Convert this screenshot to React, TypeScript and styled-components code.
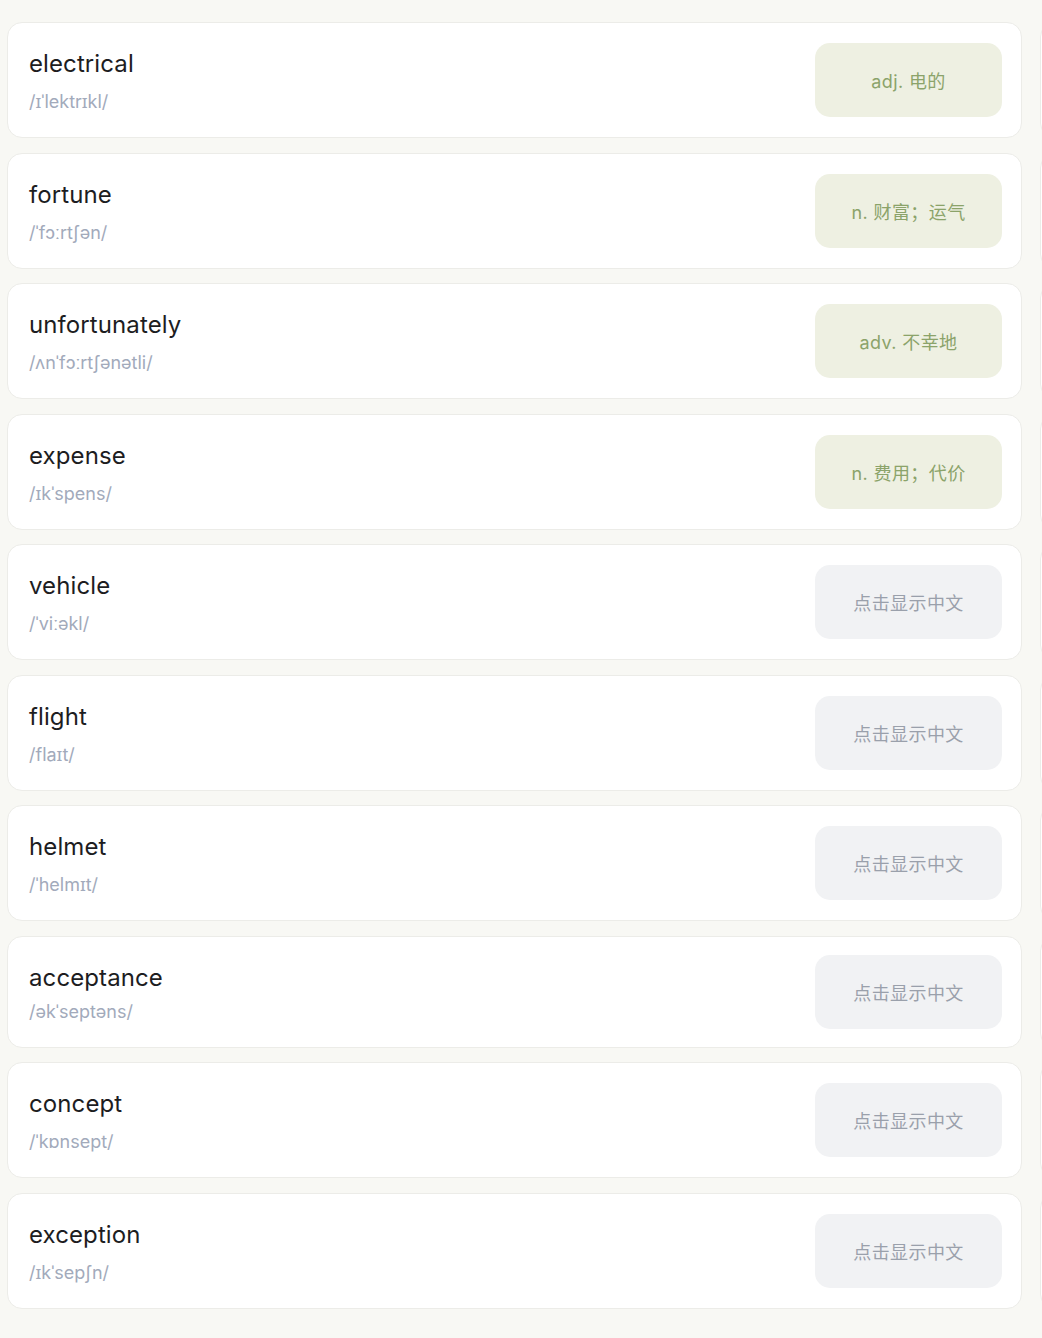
import React, {useState} from "react";
import styled, {createGlobalStyle} from "styled-components";

const GlobalStyle = createGlobalStyle`
  html, body {
    margin: 0;
    padding: 0;
    background: #f8f8f4;
    overflow: hidden;
  }
  body {
    font-family: "Inter", "Noto Sans", "Noto Sans CJK SC", sans-serif;
  }
`

const Page = styled.div`
  width: 1042px;
  height: 1338px;
  overflow: hidden;
  background: #f8f8f4;
`

const Columns = styled.div`
  display: grid;
  grid-template-columns: 1015px 1015px;
  column-gap: 18px;
  padding: 22px 0 30px 7px;
`

const List = styled.div`
  display: flex;
  flex-direction: column;
  gap: 14.5px;
`

const Card = styled.div<{$compact?: boolean}>`
  display: flex;
  align-items: center;
  justify-content: space-between;
  box-sizing: border-box;
  height: ${p => p.$compact ? "112px" : "116px"};
  padding: 0 19px 0 21px;
  background: #ffffff;
  border: 1px solid #ecece8;
  border-radius: 15px;
`

const Text = styled.div<{$compact?: boolean}>`
  display: flex;
  flex-direction: column;
  gap: ${p => p.$compact ? "9px" : "13px"};
  padding-top: 3px;
`

const Word = styled.div`
  font-size: 24px;
  line-height: 28px;
  color: #1d1d1f;
  letter-spacing: 0.1px;
`

const Phonetic = styled.div`
  font-size: 18px;
  line-height: 22px;
  color: #a2aabb;
`

const MeaningButton = styled.button<{$shown: boolean}>`
  width: 187px;
  height: 74px;
  flex-shrink: 0;
  border: none;
  border-radius: 15px;
  font-family: "Inter", "Noto Sans CJK SC", sans-serif;
  font-size: 18px;
  letter-spacing: 0.4px;
  cursor: pointer;
  background: ${p => p.$shown ? "#eef0e2" : "#f1f2f4"};
  color: ${p => p.$shown ? "#8ba36a" : "#9aa0ab"};
`

interface IWord {
    word: string
    phonetic: string
    meaning: string
    shown: boolean
    compact?: boolean
}

const words: IWord[] = [
    {word: "electrical", phonetic: "/ɪˈlektrɪkl/", meaning: "adj. 电的", shown: true},
    {word: "fortune", phonetic: "/ˈfɔːrtʃən/", meaning: "n. 财富；运气", shown: true},
    {word: "unfortunately", phonetic: "/ʌnˈfɔːrtʃənətli/", meaning: "adv. 不幸地", shown: true},
    {word: "expense", phonetic: "/ɪkˈspens/", meaning: "n. 费用；代价", shown: true},
    {word: "vehicle", phonetic: "/ˈviːəkl/", meaning: "n. 车辆", shown: false},
    {word: "flight", phonetic: "/flaɪt/", meaning: "n. 航班", shown: false},
    {word: "helmet", phonetic: "/ˈhelmɪt/", meaning: "n. 头盔", shown: false},
    {word: "acceptance", phonetic: "/əkˈseptəns/", meaning: "n. 接受", shown: false, compact: true},
    {word: "concept", phonetic: "/ˈkɒnsept/", meaning: "n. 概念", shown: false},
    {word: "exception", phonetic: "/ɪkˈsepʃn/", meaning: "n. 例外", shown: false},
]

const WordCard: React.FC<{item: IWord}> = ({item}) => {
    const [shown, setShown] = useState(item.shown)
    return (
        <Card $compact={item.compact}>
            <Text $compact={item.compact}>
                <Word>{item.word}</Word>
                <Phonetic>{item.phonetic}</Phonetic>
            </Text>
            <MeaningButton $shown={shown} onClick={() => setShown(!shown)}>
                {shown ? item.meaning : "点击显示中文"}
            </MeaningButton>
        </Card>
    )
}

const App: React.FC = () => {
    return (
        <Page>
            <GlobalStyle/>
            <Columns>
                <List>
                    {words.map(w => <WordCard key={w.word} item={w}/>)}
                </List>
                {/* next page of cards, only its left edge peeks in */}
                <List>
                    {words.map(w => <Card key={"next-" + w.word} $compact={w.compact}/>)}
                </List>
            </Columns>
        </Page>
    )
}

export default App;
